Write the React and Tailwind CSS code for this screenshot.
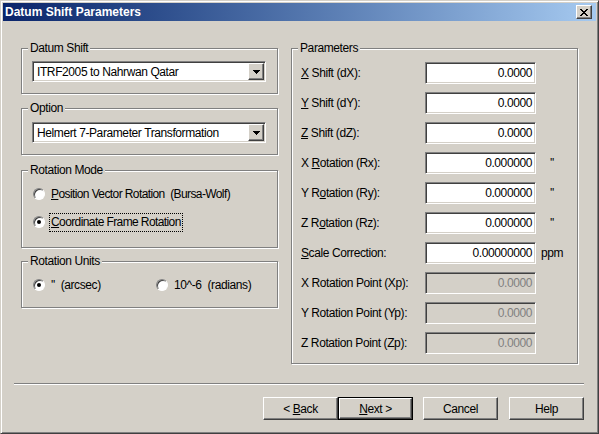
import React from 'react';

const raised =
  'border border-white border-r-[#404040] border-b-[#404040] bg-[#d4d0c8] shadow-[inset_-1px_-1px_0_#808080]';
const sunken =
  'border border-[#808080] border-r-white border-b-white shadow-[inset_1px_1px_0_#404040,inset_-1px_-1px_0_#d4d0c8]';

function Group({ label, className = '', children }) {
  return (
    <div className={`relative border border-[#808080] shadow-[1px_1px_0_#fff,inset_1px_1px_0_#fff] ${className}`}>
      <span className="absolute left-[6px] top-[-8px] bg-[#d4d0c8] px-[2px] leading-[14px]">{label}</span>
      {children}
    </div>
  );
}

function Combo({ value }) {
  return (
    <div className={`flex h-[21px] w-[234px] items-stretch bg-white p-[1px] ${sunken}`}>
      <span className="flex flex-1 items-center pl-[3px]">{value}</span>
      <span className={`flex w-[16px] items-center justify-center ${raised}`}>
        <svg width="7" height="4" viewBox="0 0 7 4" shapeRendering="crispEdges">
          <path d="M0 0h7v1h-1v1h-1v1h-1v1h-1v-1h-1v-1h-1v-1h-1z" fill="#000" />
        </svg>
      </span>
    </div>
  );
}

function Radio({ checked }) {
  return (
    <span className="inline-flex h-[12px] w-[12px] shrink-0 items-center justify-center rounded-full border border-[#808080] border-r-white border-b-white bg-white shadow-[inset_1px_1px_0_#404040]">
      {checked && <span className="h-[4px] w-[4px] rounded-full bg-black" />}
    </span>
  );
}

function Field({ value, disabled }) {
  return (
    <div
      className={`flex h-[22px] w-[111px] items-center justify-end pr-[3px] ${sunken} ${
        disabled ? 'bg-[#d4d0c8] text-[#808080]' : 'bg-white'
      }`}
    >
      {value}
    </div>
  );
}

function Btn({ children, isDefault }) {
  if (isDefault) {
    return (
      <div className="h-[23px] w-[75px] border border-black">
        <div className={`flex h-full w-full items-center justify-center ${raised}`}>
          <span className="whitespace-pre">{children}</span>
        </div>
      </div>
    );
  }
  return (
    <div className={`flex h-[23px] w-[75px] items-center justify-center ${raised}`}>
      <span className="whitespace-pre">{children}</span>
    </div>
  );
}

const params = [
  { label: <><u>X</u> Shift (dX):</>, value: '0.0000' },
  { label: <><u>Y</u> Shift (dY):</>, value: '0.0000' },
  { label: <><u>Z</u> Shift (dZ):</>, value: '0.0000' },
  { label: <>X <u>R</u>otation (Rx):</>, value: '0.000000', unit: "''" },
  { label: <>Y R<u>o</u>tation (Ry):</>, value: '0.000000', unit: "''" },
  { label: <>Z R<u>o</u>tation (Rz):</>, value: '0.000000', unit: "''" },
  { label: <><u>S</u>cale Correction:</>, value: '0.00000000', unit: 'ppm' },
  { label: 'X Rotation Point (Xp):', value: '0.0000', disabled: true },
  { label: 'Y Rotation Point (Yp):', value: '0.0000', disabled: true },
  { label: 'Z Rotation Point (Zp):', value: '0.0000', disabled: true },
];

export default function App() {
  return (
    <div className="h-[434px] w-[599px] overflow-hidden border border-[#d4d0c8] border-r-[#404040] border-b-[#404040] bg-[#d4d0c8] p-[2px] font-['Liberation_Sans',Arial,sans-serif] text-[12px] tracking-[-0.4px] text-black shadow-[inset_1px_1px_0_#fff,inset_-1px_-1px_0_#808080]">
      {/* Title bar */}
      <div className="flex h-[18px] items-center justify-between bg-linear-to-r from-[#0a246a] to-[#a6caf0] pl-[2px] pr-[4px]">
        <span className="font-bold tracking-normal text-white">Datum Shift Parameters</span>
        <span className={`flex h-[14px] w-[16px] items-center justify-center ${raised}`}>
          <svg width="8" height="7" viewBox="0 0 8 7" shapeRendering="crispEdges">
            <path
              d="M0 0h2v1h1v1h2v-1h1v-1h2v1h-1v1h-1v1h-1v1h1v1h1v1h1v1h-2v-1h-1v-1h-2v1h-1v1h-2v-1h1v-1h1v-1h1v-1h-1v-1h-1v-1h-1z"
              fill="#000"
            />
          </svg>
        </span>
      </div>

      <div className="mt-[27px] flex pl-[18px]">
        {/* Left column */}
        <div className="flex w-[257px] flex-col">
          <Group label="Datum Shift" className="h-[46px] pl-[10px] pt-[12px]">
            <Combo value="ITRF2005 to Nahrwan Qatar" />
          </Group>

          <Group label="Option" className="mt-[14px] h-[47px] pl-[10px] pt-[13px]">
            <Combo value="Helmert 7-Parameter Transformation" />
          </Group>

          <Group label="Rotation Mode" className="mt-[15px] flex h-[78px] flex-col gap-[8px] pl-[11px] pt-[13px]">
            <div className="flex h-[20px] items-center">
              <Radio />
              <span className="ml-[4px] border border-transparent px-[1px] leading-[17px] tracking-[-0.6px]">
                <u>P</u>osition Vector Rotation&nbsp; (Bursa-Wolf)
              </span>
            </div>
            <div className="flex h-[20px] items-center">
              <Radio checked />
              <span className="ml-[4px] border border-dotted border-black px-[1px] leading-[17px] tracking-[-0.6px]">
                <u>C</u>oordinate Frame Rotation
              </span>
            </div>
          </Group>

          <Group label="Rotation Units" className="mt-[13px] h-[47px] pl-[11px] pt-[13px]">
            <div className="flex h-[20px] items-center">
              <div className="flex w-[123px] items-center">
                <Radio checked />
                <span className="ml-[6px]">''&nbsp; (arcsec)</span>
              </div>
              <Radio />
              <span className="ml-[6px]">10^-6&nbsp; (radians)</span>
            </div>
          </Group>
        </div>

        {/* Parameters */}
        <Group label="Parameters" className="ml-[13px] flex h-[316px] w-[287px] flex-col gap-[8px] pl-[9px] pt-[13px]">
          {params.map((p, i) => (
            <div key={i} className="flex h-[22px] items-center">
              <span className="w-[124px]">{p.label}</span>
              <Field value={p.value} disabled={p.disabled} />
              {p.unit === 'ppm' && <span className="ml-[5px]">ppm</span>}
              {p.unit === "''" && <span className="ml-[14px]">''</span>}
            </div>
          ))}
        </Group>
      </div>

      {/* Separator */}
      <div className="ml-[11px] mt-[19px] h-[2px] w-[570px] border-t border-b border-t-[#808080] border-b-white" />

      {/* Buttons */}
      <div className="ml-[260px] mt-[12px] flex">
        <Btn>
          {'< '}
          <u>B</u>ack
        </Btn>
        <Btn isDefault>
          <u>N</u>ext{' >'}
        </Btn>
        <div className="ml-[10px]">
          <Btn>Cancel</Btn>
        </div>
        <div className="ml-[11px]">
          <Btn>Help</Btn>
        </div>
      </div>
    </div>
  );
}
